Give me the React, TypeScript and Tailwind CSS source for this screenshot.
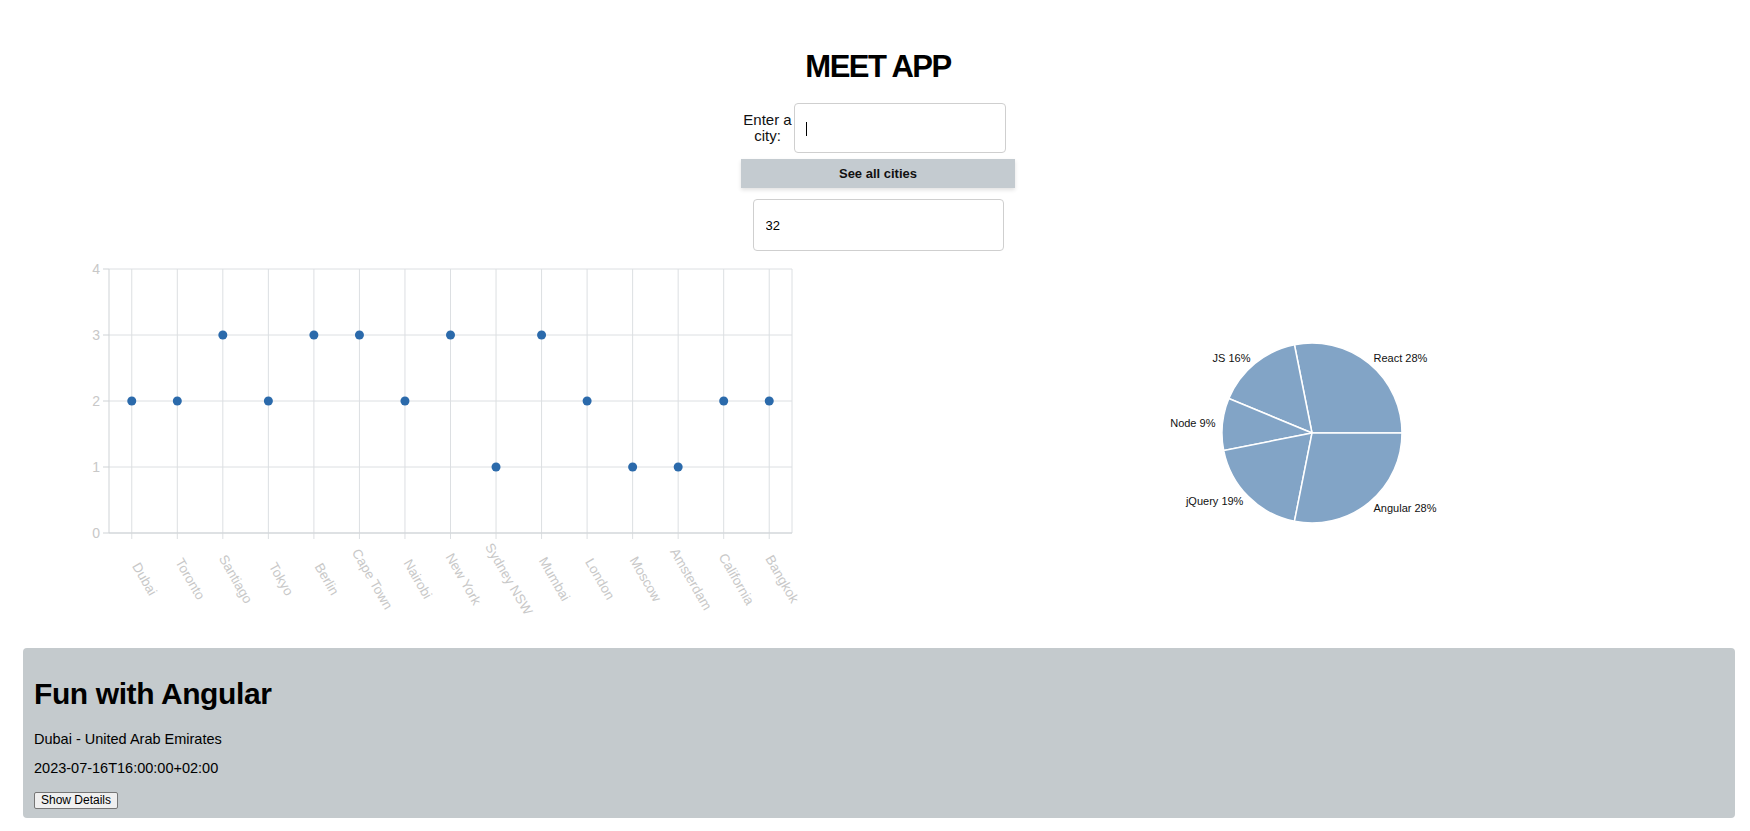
const cities = [
  { name: 'Dubai', count: 2 },
  { name: 'Toronto', count: 2 },
  { name: 'Santiago', count: 3 },
  { name: 'Tokyo', count: 2 },
  { name: 'Berlin', count: 3 },
  { name: 'Cape Town', count: 3 },
  { name: 'Nairobi', count: 2 },
  { name: 'New York', count: 3 },
  { name: 'Sydney NSW', count: 1 },
  { name: 'Mumbai', count: 3 },
  { name: 'London', count: 2 },
  { name: 'Moscow', count: 1 },
  { name: 'Amsterdam', count: 1 },
  { name: 'California', count: 2 },
  { name: 'Bangkok', count: 2 },
]

const genres = [
  { name: 'React', value: 9 },
  { name: 'JS', value: 5 },
  { name: 'Node', value: 3 },
  { name: 'jQuery', value: 6 },
  { name: 'Angular', value: 9 },
]

const FONT = '"Liberation Sans", Arial, sans-serif'

// plot box of the scatter chart, in svg coords
const LEFT = 109
const RIGHT = 792
const TOP = 14
const BOTTOM = 278

function ScatterChart() {
  const band = (RIGHT - LEFT) / cities.length
  const xAt = (i: number) => LEFT + band * (i + 0.5)
  const yAt = (v: number) => BOTTOM - (v / 4) * (BOTTOM - TOP)
  const grid = '#dcdfe2'
  const axis = '#cfd3d6'
  const label = '#c8c8c8'

  return (
    <svg width={875} height={360} style={{ fontFamily: FONT }}>
      {[0, 1, 2, 3, 4].map((v) => (
        <g key={v}>
          <line x1={LEFT} x2={RIGHT} y1={yAt(v)} y2={yAt(v)} stroke={grid} />
          <line x1={LEFT - 6} x2={LEFT} y1={yAt(v)} y2={yAt(v)} stroke={axis} />
          <text x={LEFT - 9} y={yAt(v)} dy="0.35em" textAnchor="end" fontSize={14} fill={label}>
            {v}
          </text>
        </g>
      ))}
      {cities.map((c, i) => (
        <g key={c.name}>
          <line x1={xAt(i)} x2={xAt(i)} y1={TOP} y2={BOTTOM + 6} stroke={grid} />
          <text
            transform={`translate(${xAt(i) + 13},${324}) rotate(60)`}
            dy="0.35em"
            textAnchor="middle"
            fontSize={13.5}
            fill={label}
          >
            {c.name}
          </text>
        </g>
      ))}
      <line x1={RIGHT} x2={RIGHT} y1={TOP} y2={BOTTOM} stroke={grid} />
      <line x1={LEFT} x2={LEFT} y1={TOP} y2={BOTTOM} stroke={axis} />
      <line x1={LEFT} x2={RIGHT} y1={BOTTOM} y2={BOTTOM} stroke={axis} />
      {cities.map((c, i) => (
        <circle key={c.name} cx={xAt(i)} cy={yAt(c.count)} r={4.5} fill="#2b6aab" />
      ))}
    </svg>
  )
}

function PieChart() {
  const cx = 437
  const cy = 178
  const r = 90
  const total = genres.reduce((s, g) => s + g.value, 0)
  const pt = (deg: number, rad: number) => {
    const a = (deg * Math.PI) / 180
    return [cx + rad * Math.cos(a), cy - rad * Math.sin(a)]
  }

  let start = 0
  const slices = genres.map((g) => {
    const sweep = (g.value / total) * 360
    const end = start + sweep
    const [x1, y1] = pt(start, r)
    const [x2, y2] = pt(end, r)
    const d = `M${cx},${cy} L${x1},${y1} A${r},${r} 0 ${sweep > 180 ? 1 : 0} 0 ${x2},${y2} Z`
    const mid = start + sweep / 2
    const [lx, ly] = pt(mid, 97)
    const anchor = Math.cos((mid * Math.PI) / 180) >= 0 ? 'start' : 'end'
    start = end
    return { d, lx, ly, anchor, text: `${g.name} ${Math.round((g.value / total) * 100)}%`, key: g.name }
  })

  return (
    <svg width={875} height={360} style={{ fontFamily: FONT }}>
      {slices.map((s) => (
        <path key={s.key} d={s.d} fill="#82a4c6" stroke="#fff" strokeWidth={1.5} />
      ))}
      {slices.map((s) => (
        <text key={s.key} x={s.lx} y={s.ly} dy="0.35em" textAnchor={s.anchor as 'start' | 'end'} fontSize={11} fill="#111">
          {s.text}
        </text>
      ))}
    </svg>
  )
}

export default function App() {
  return (
    <div className="min-h-[831px] bg-white text-black" style={{ fontFamily: FONT }}>
      <div className="flex flex-col items-center pl-[6px]">
        <h1 className="mt-[49px] text-[31px] leading-[36px] font-bold tracking-[-1.5px]">MEET APP</h1>

        <div className="mt-[18px] mr-[9px] flex items-center">
          <label className="w-[52px] text-center text-[15px] leading-[16px] text-[#111]">Enter a city:</label>
          <div className="relative">
            <input
              type="text"
              className="w-[212px] h-[50px] rounded-[4px] border border-[#cfcfcf] bg-white px-3 outline-none"
            />
            <span className="absolute left-[12px] top-[19px] h-[14px] w-px bg-black" />
          </div>
        </div>

        <button className="mt-[6px] w-[274px] h-[29px] bg-[#c4cbd0] text-[13px] font-bold text-[#111] shadow-[0_2px_4px_rgba(0,0,0,0.12)]">
          See all cities
        </button>

        <input
          type="text"
          readOnly
          value="32"
          className="mt-[11px] w-[251px] h-[52px] rounded-[4px] border border-[#cfcfcf] bg-white pl-[12px] text-[13px] outline-none"
        />
      </div>

      <div className="mt-[4px] grid grid-cols-2">
        <ScatterChart />
        <PieChart />
      </div>

      <div className="mt-[33px] ml-[23px] mr-[15px] h-[170px] rounded-[4px] bg-[#c4cacd] px-[11px] pt-[29px]">
        <h2 className="text-[30px] leading-[34px] font-bold tracking-[-0.4px]">Fun with Angular</h2>
        <p className="mt-[19px] text-[14.5px] leading-[18px]">Dubai - United Arab Emirates</p>
        <p className="mt-[11px] text-[14.5px] leading-[18px]">2023-07-16T16:00:00+02:00</p>
        <button className="mt-[15px] h-[17px] w-[84px] rounded-[2px] border border-[#767676] bg-[#efefef] text-[12px] leading-[15px]">
          Show Details
        </button>
      </div>
    </div>
  )
}
